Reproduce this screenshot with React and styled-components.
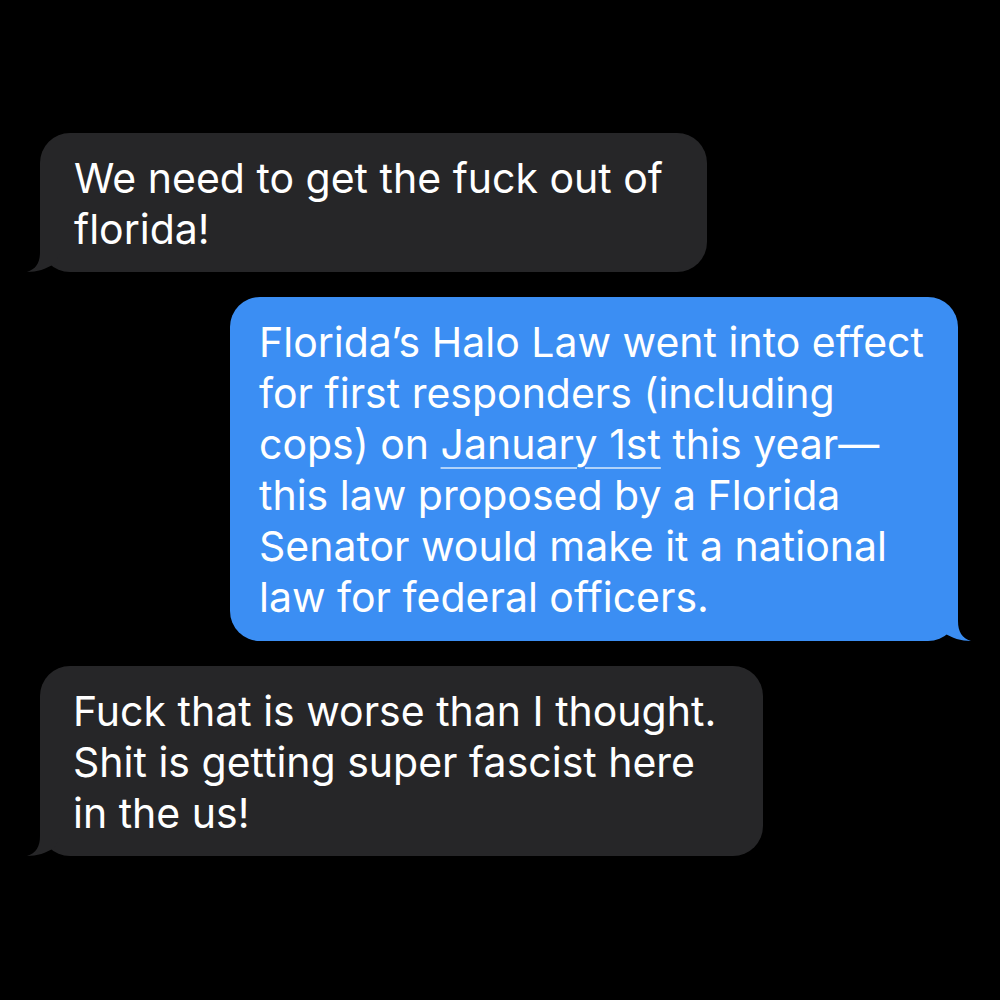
import React from "react";
import styled, { createGlobalStyle } from "styled-components";

const GlobalStyle = createGlobalStyle`
  html, body {
    margin: 0;
    padding: 0;
    background: #000;
  }
`;

const Screen = styled.div`
  width: 1000px;
  height: 1000px;
  background: #000;
  display: flex;
  flex-direction: column;
  padding: 133px 42px 0 40px;
  box-sizing: border-box;
  gap: 25px;
  font-family: Inter, "Liberation Sans", sans-serif;
`;

const Row = styled.div`
  display: flex;
  justify-content: ${(p) => (p.$sent ? "flex-end" : "flex-start")};
`;

const Bubble = styled.div`
  position: relative;
  width: ${(p) => p.$width}px;
  box-sizing: border-box;
  padding: 20px 20px ${(p) => (p.$sent ? 18 : 17)}px ${(p) => p.$left}px;
  border-radius: 30px;
  background: ${(p) => (p.$sent ? "#3b8ef3" : "#262628")};
  color: #fff;
  font-size: 41px;
  line-height: 51px;
  white-space: nowrap;
`;

const Tail = styled.svg`
  position: absolute;
  bottom: 0;
  width: 34px;
  height: 40px;
  ${(p) => (p.$sent ? "right: -14px; transform: scaleX(-1);" : "left: -14px;")}
`;

const Link = styled.span`
  text-decoration: underline;
  text-decoration-color: rgba(255, 255, 255, 0.6);
  text-decoration-thickness: 2px;
  text-underline-offset: 8px;
`;

const BubbleTail = ({ sent, color }) => (
  <Tail $sent={sent} viewBox="0 0 34 40">
    <path
      d="M14 0 L14 20 C14 31 10 37 1 40 C11 40 20 37 28 32 L34 22 L34 0 Z"
      fill={color}
    />
  </Tail>
);

export default function App() {
  return (
    <>
      <GlobalStyle />
      <Screen>
        <Row>
          <Bubble $width={667} $left={34}>
            We need to get the fuck out of
            <br />
            florida!
            <BubbleTail color="#262628" />
          </Bubble>
        </Row>
        <Row $sent>
          <Bubble $sent $width={728} $left={29}>
            Florida’s Halo Law went into effect
            <br />
            for first responders (including
            <br />
            cops) on <Link>January 1st</Link> this year—
            <br />
            this law proposed by a Florida
            <br />
            Senator would make it a national
            <br />
            law for federal officers.
            <BubbleTail sent color="#3b8ef3" />
          </Bubble>
        </Row>
        <Row>
          <Bubble $width={723} $left={33}>
            Fuck that is worse than I thought.
            <br />
            Shit is getting super fascist here
            <br />
            in the us!
            <BubbleTail color="#262628" />
          </Bubble>
        </Row>
      </Screen>
    </>
  );
}
